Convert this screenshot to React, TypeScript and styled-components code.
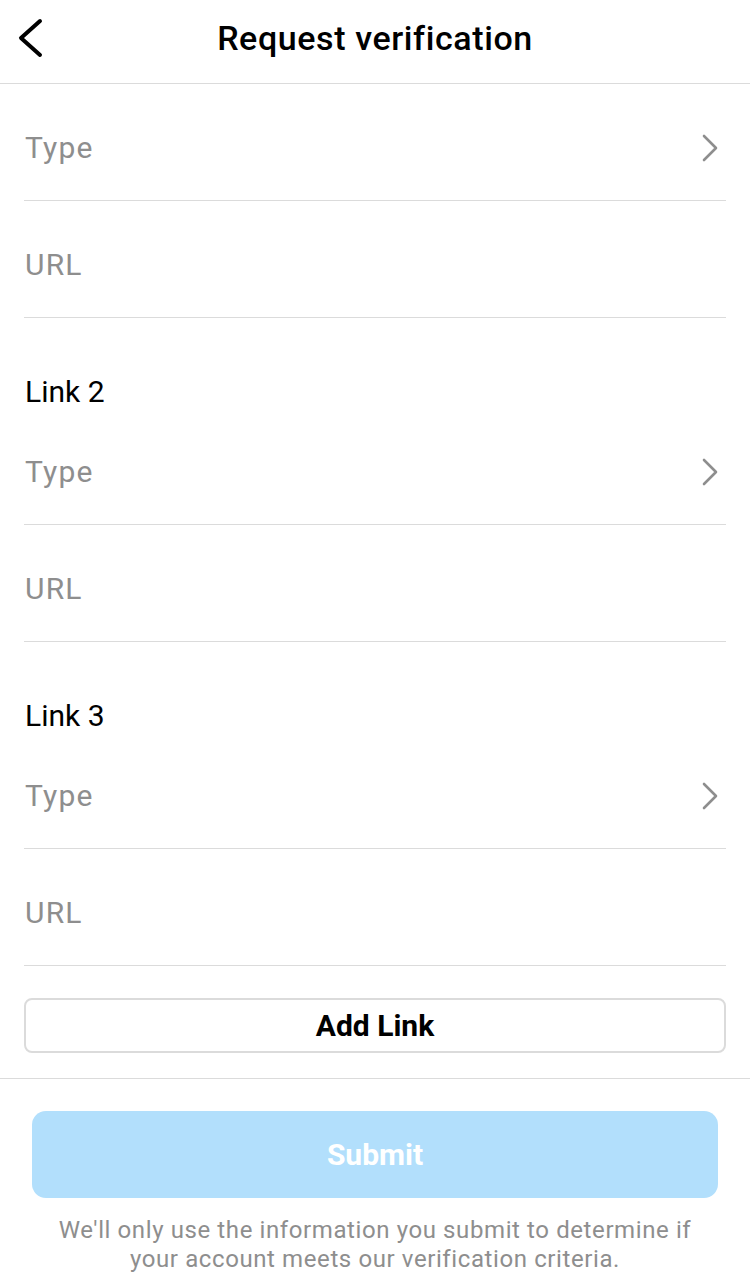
import styled, { createGlobalStyle } from "styled-components";

const GlobalStyle = createGlobalStyle`
  html, body {
    margin: 0;
    padding: 0;
    background: #ffffff;
  }
  body {
    font-family: Roboto, "Liberation Sans", Arial, sans-serif;
    color: #000;
  }
  * {
    box-sizing: border-box;
  }
`;

const Page = styled.div`
  width: 750px;
  min-height: 1288px;
  background: #fff;
  display: flex;
  flex-direction: column;
`;

const Header = styled.header`
  height: 84px;
  border-bottom: 1px solid #dbdbdb;
  display: grid;
  grid-template-columns: 80px 1fr 80px;
  align-items: center;
  padding-bottom: 8px;
`;

const BackButton = styled.button`
  background: none;
  border: none;
  padding: 0 0 0 16px;
  display: flex;
  align-items: center;
  cursor: pointer;
`;

const Title = styled.h1`
  margin: 0;
  text-align: center;
  font-size: 34px;
  font-weight: 500;
  letter-spacing: 0.6px;
`;

const Form = styled.div`
  padding: 0 24px;
  display: flex;
  flex-direction: column;
`;

const Row = styled.div`
  height: 117px;
  border-bottom: 1px solid #dbdbdb;
  display: flex;
  align-items: center;
  justify-content: space-between;
  padding-top: 12px;
  padding-left: 1px;
`;

const Placeholder = styled.span`
  font-size: 30px;
  line-height: 36px;
  color: #8e8e8e;
  letter-spacing: 1.2px;
`;

const LinkLabel = styled.div`
  height: 90px;
  padding-top: 57px;
  font-size: 30px;
  line-height: 33px;
  padding-left: 1px;
`;

const AddLinkButton = styled.button`
  margin: 32px 0 25px;
  height: 55px;
  width: 100%;
  background: #fff;
  border: 2px solid #dbdbdb;
  border-radius: 8px;
  font-family: Roboto, "Liberation Sans", Arial, sans-serif;
  font-size: 30px;
  font-weight: 700;
  color: #000;
`;

const Footer = styled.footer`
  border-top: 1px solid #dbdbdb;
  padding: 32px 32px 0;
  display: flex;
  flex-direction: column;
  align-items: center;
`;

const SubmitButton = styled.button`
  width: 100%;
  height: 87px;
  border: none;
  border-radius: 14px;
  background: #b2dffc;
  color: #fff;
  font-family: Roboto, "Liberation Sans", Arial, sans-serif;
  font-size: 30px;
  font-weight: 700;
`;

const Note = styled.p`
  margin: 18px 0 0;
  max-width: 660px;
  text-align: center;
  font-size: 24px;
  line-height: 29px;
  color: #8e8e8e;
  letter-spacing: 0.6px;
`;

function BackIcon() {
  return (
    <svg width="30" height="40" viewBox="0 0 30 40">
      <polyline
        points="24,3 5,20 24,37"
        fill="none"
        stroke="#000"
        strokeWidth="4"
        strokeLinecap="round"
        strokeLinejoin="round"
      />
    </svg>
  );
}

function ChevronRight() {
  return (
    <svg width="20" height="30" viewBox="0 0 20 30" style={{ marginRight: 6 }}>
      <polyline
        points="4,3 16,15 4,27"
        fill="none"
        stroke="#8e8e8e"
        strokeWidth="2.6"
        strokeLinecap="round"
        strokeLinejoin="round"
      />
    </svg>
  );
}

function LinkFields({ label }: { label?: string }) {
  return (
    <>
      {label && <LinkLabel>{label}</LinkLabel>}
      <Row>
        <Placeholder>Type</Placeholder>
        <ChevronRight />
      </Row>
      <Row>
        <Placeholder>URL</Placeholder>
      </Row>
    </>
  );
}

export default function App() {
  return (
    <Page>
      <GlobalStyle />
      <Header>
        <BackButton aria-label="Back">
          <BackIcon />
        </BackButton>
        <Title>Request verification</Title>
        <div />
      </Header>
      <Form>
        <LinkFields />
        <LinkFields label="Link 2" />
        <LinkFields label="Link 3" />
        <AddLinkButton>Add Link</AddLinkButton>
      </Form>
      <Footer>
        <SubmitButton>Submit</SubmitButton>
        <Note>
          We'll only use the information you submit to determine if your account
          meets our verification criteria.
        </Note>
      </Footer>
    </Page>
  );
}
